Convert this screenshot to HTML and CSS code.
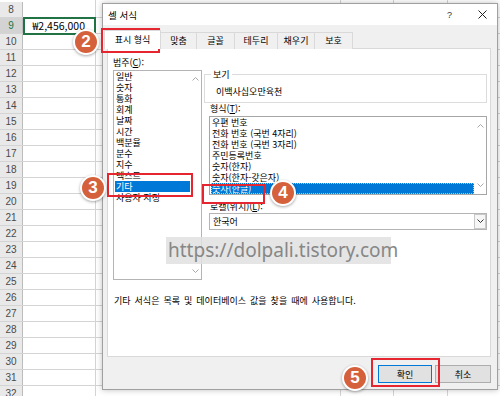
FILE: index.html
```html
<!DOCTYPE html>
<html lang="ko">
<head>
    <meta charset="UTF-8">
    <title>셀 서식</title>
    <link rel="stylesheet" href="styles.css">
</head>
<body>
    <div class="sheet">
        <div class="row"><span class="rh">8</span></div>
        <div class="row active"><span class="rh">9</span><span class="val">₩2,456,000</span></div>
        <div class="row"><span class="rh">10</span></div>
        <div class="row"><span class="rh">11</span></div>
        <div class="row"><span class="rh">12</span></div>
        <div class="row"><span class="rh">13</span></div>
        <div class="row"><span class="rh">14</span></div>
        <div class="row"><span class="rh">15</span></div>
        <div class="row"><span class="rh">16</span></div>
        <div class="row"><span class="rh">17</span></div>
        <div class="row"><span class="rh">18</span></div>
        <div class="row"><span class="rh">19</span></div>
        <div class="row"><span class="rh">20</span></div>
        <div class="row"><span class="rh">21</span></div>
        <div class="row"><span class="rh">22</span></div>
        <div class="row"><span class="rh">23</span></div>
        <div class="row"><span class="rh">24</span></div>
        <div class="row"><span class="rh">25</span></div>
        <div class="row"><span class="rh">26</span></div>
        <div class="row"><span class="rh">27</span></div>
        <div class="row"><span class="rh">28</span></div>
        <div class="row"><span class="rh">29</span></div>
        <div class="row"><span class="rh">30</span></div>
        <div class="row"><span class="rh">31</span></div>
        <div class="row"><span class="rh">32</span></div>
    </div>

    <div class="dialog">
        <div class="titlebar">
            <span class="title">셀 서식</span>
            <span class="help">?</span>
            <svg class="close" width="9" height="9" viewBox="0 0 9 9">
                <path d="M0.5 0.5L8.5 8.5M8.5 0.5L0.5 8.5" stroke="#222" stroke-width="1" fill="none"/>
            </svg>
        </div>

        <div class="tabs">
            <div class="tab on">표시 형식</div>
            <div class="tab">맞춤</div>
            <div class="tab">글꼴</div>
            <div class="tab">테두리</div>
            <div class="tab">채우기</div>
            <div class="tab">보호</div>
        </div>

        <div class="panel">
            <div class="cols">
                <div class="col-left">
                    <div class="label">범주(<u>C</u>):</div>
                    <div class="list cat">
                        <div class="items">
                            <div class="item">일반</div>
                            <div class="item">숫자</div>
                            <div class="item">통화</div>
                            <div class="item">회계</div>
                            <div class="item">날짜</div>
                            <div class="item">시간</div>
                            <div class="item">백분율</div>
                            <div class="item">분수</div>
                            <div class="item">지수</div>
                            <div class="item">텍스트</div>
                            <div class="item sel">기타</div>
                            <div class="item">사용자 지정</div>
                        </div>
                        <div class="scroll">
                            <svg width="7" height="5" viewBox="0 0 7 5"><polyline points="0.5,4.5 3.5,1.5 6.5,4.5" fill="none" stroke="#a8a8a8"/></svg>
                            <svg width="7" height="5" viewBox="0 0 7 5"><polyline points="0.5,0.5 3.5,3.5 6.5,0.5" fill="none" stroke="#a8a8a8"/></svg>
                        </div>
                    </div>
                </div>

                <div class="col-right">
                    <fieldset class="sample">
                        <legend>보기</legend>
                        <div>이백사십오만육천</div>
                    </fieldset>

                    <div class="label inset">형식(<u>T</u>):</div>
                    <div class="list fmt">
                        <div class="items">
                            <div class="item">우편 번호</div>
                            <div class="item">전화 번호 (국번 4자리)</div>
                            <div class="item">전화 번호 (국번 3자리)</div>
                            <div class="item">주민등록번호</div>
                            <div class="item">숫자(한자)</div>
                            <div class="item">숫자(한자-갖은자)</div>
                            <div class="item sel focus">숫자(한글)</div>
                        </div>
                        <div class="scroll">
                            <svg width="7" height="5" viewBox="0 0 7 5"><polyline points="0.5,4.5 3.5,1.5 6.5,4.5" fill="none" stroke="#a8a8a8"/></svg>
                            <svg width="7" height="5" viewBox="0 0 7 5"><polyline points="0.5,0.5 3.5,3.5 6.5,0.5" fill="none" stroke="#a8a8a8"/></svg>
                        </div>
                    </div>

                    <div class="label inset locale">로캘(위치)(<u>L</u>):</div>
                    <div class="select">
                        <span class="select-text">한국어</span>
                        <span class="select-btn">
                            <svg width="7" height="5" viewBox="0 0 7 5"><polyline points="0.5,0.5 3.5,3.5 6.5,0.5" fill="none" stroke="#333"/></svg>
                        </span>
                    </div>
                </div>
            </div>

            <p class="desc">기타 서식은 목록 및 데이터베이스 값을 찾을 때에 사용합니다.</p>
        </div>

        <div class="footer">
            <button class="btn default">확인</button>
            <button class="btn cancel">취소</button>
        </div>
    </div>

    <!-- annotations drawn over the screenshot -->
    <div class="watermark">https://dolpali.tistory.com</div>

    <div class="mark m2"></div>
    <div class="mark m3"></div>
    <div class="mark m4"></div>
    <div class="mark m5"></div>

    <div class="badge b2">2</div>
    <div class="badge b3">3</div>
    <div class="badge b4">4</div>
    <div class="badge b5">5</div>
</body>
</html>
```

FILE: styles.css
```css
* {
    box-sizing: border-box;
}
body {
    margin: 0;
    width: 500px;
    height: 396px;
    overflow: hidden;
    position: relative;
    background: #fff;
    font-family: "Noto Sans CJK KR", "Noto Sans", sans-serif;
    font-size: 9px;
    color: #000;
}

/* spreadsheet behind the dialog */
.sheet {
    padding-top: 2px;
    background:
        linear-gradient(#d4d4d4, #d4d4d4) 95px 0 / 1px 100% no-repeat,
        linear-gradient(#d4d4d4, #d4d4d4) 340px 0 / 1px 100% no-repeat,
        linear-gradient(#d4d4d4, #d4d4d4) 393px 0 / 1px 100% no-repeat,
        linear-gradient(#d4d4d4, #d4d4d4) 447px 0 / 1px 100% no-repeat;
}
.row {
    display: flex;
    height: 16px;
    border-bottom: 1px solid #d4d4d4;
}
.rh {
    width: 23px;
    flex: none;
    background: #e9e9e9;
    border-right: 1px solid #bcbcbc;
    color: #4a4a4a;
    font: 10px/15px "Liberation Sans", sans-serif;
    text-align: center;
}
.row.active .rh {
    background: #d3d3d3;
    color: #217346;
}
.val {
    width: 73px;
    height: 18px;
    margin-top: -1px;
    border: 2px solid #217346;
    padding-right: 9px;
    text-align: right;
    font-size: 10.5px;
    line-height: 14px;
    background: #fff;
}

/* dialog window */
.dialog {
    position: absolute;
    left: 102px;
    top: 3px;
    width: 396px;
    height: 387px;
    border: 1px solid #a0a0a0;
    background: #f0f0f0;
    box-shadow: 0 0 6px rgba(0, 0, 0, 0.25);
    display: flex;
    flex-direction: column;
}
.titlebar {
    height: 21px;
    flex: none;
    background: #fff;
    display: flex;
    align-items: center;
    padding: 0 10px 0 5px;
}
.title {
    font-size: 9.5px;
}
.help {
    margin-left: auto;
    margin-right: 26px;
    font: 9px "Liberation Sans", sans-serif;
    color: #333;
}
.tabs {
    display: flex;
    align-items: flex-end;
    height: 19px;
    margin: 5px 0 -1px 4px;
    position: relative;
    z-index: 1;
}
.tab {
    height: 17px;
    line-height: 15px;
    text-align: center;
    border: 1px solid #d9d9d9;
    border-bottom: none;
    margin-left: -1px;
    background: #f0f0f0;
}
.tab:nth-child(1) { width: 57px; }
.tab:nth-child(2) { width: 37px; }
.tab:nth-child(3) { width: 39px; }
.tab:nth-child(4) { width: 44px; }
.tab:nth-child(5) { width: 38px; }
.tab:nth-child(6) { width: 39px; }
.tab.on {
    height: 19px;
    line-height: 17px;
    margin-left: -3px;
    background: #fff;
}
.panel {
    height: 309px;
    flex: none;
    margin: 0 6px 0 4px;
    background: #fff;
    border: 1px solid #d9d9d9;
    padding: 8px 3px 0 5px;
}
.cols {
    display: grid;
    grid-template-columns: 89px 1fr;
    column-gap: 2px;
}
.label {
    line-height: 11px;
    margin-bottom: 2px;
}
.label.inset {
    margin-left: 6px;
}
.label.locale {
    margin-top: 6px;
    margin-bottom: 1px;
}

.list {
    display: flex;
    border: 1px solid #b4b4b4;
    background: #fff;
}
.list .items {
    flex: 1;
    padding-left: 1px;
}
.item {
    line-height: 11px;
    padding-left: 1px;
    white-space: nowrap;
}
.item.sel {
    background: #0078d7;
    color: #fff;
}
.item.focus {
    outline: 1px dotted #f2c27a;
    outline-offset: -1px;
}
.scroll {
    flex: none;
    display: flex;
    flex-direction: column;
    justify-content: space-between;
    align-items: center;
}
.cat {
    height: 210px;
}
.cat .scroll {
    width: 11px;
    padding: 5px 0 5px;
}
.fmt {
    height: 79px;
    margin-left: 5px;
    border-color: #a6a6a6;
}
.fmt .scroll {
    width: 12px;
    padding: 6px 0 6px;
}

.sample {
    margin: 12px 0 0;
    padding: 6px 11px 5px;
    border: 1px solid #dcdcdc;
    line-height: 11px;
    min-width: 0;
}
.sample legend {
    padding: 0 2px;
    margin-left: -5px;
    line-height: 11px;
}
.select {
    display: flex;
    height: 17px;
    margin-left: 5px;
    border: 1px solid #b4b4b4;
    background: #fff;
}
.select-text {
    flex: 1;
    padding-left: 3px;
    line-height: 15px;
}
.select-btn {
    width: 12px;
    border: 1px solid #c8c8c8;
    background: #f6f6f6;
    display: flex;
    align-items: center;
    justify-content: center;
}
.desc {
    margin: 15px 0 0 1px;
    line-height: 11px;
    word-spacing: 1.5px;
}

.footer {
    flex: 1;
    display: flex;
    justify-content: flex-end;
    gap: 3px;
    padding: 8px 6px 0 0;
}
.btn {
    height: 18px;
    padding: 0;
    font: inherit;
    background: #e1e1e1;
    border: 1px solid #adadad;
    color: #000;
}
.btn.default {
    width: 54px;
    border-color: #0078d7;
}
.btn.cancel {
    width: 56px;
}

/* overlays */
.watermark {
    position: absolute;
    left: 166px;
    top: 237px;
    width: 225px;
    height: 27px;
    padding-left: 2px;
    background: rgba(224, 224, 224, 0.85);
    color: #878787;
    font: 19px/27px "Noto Sans", sans-serif;
    white-space: nowrap;
}
.mark {
    position: absolute;
    border: 2px solid #e5252f;
}
.m2 { left: 101px; top: 28px; width: 59px; height: 25px; }
.m3 { left: 107px; top: 173px; width: 86px; height: 24px; }
.m4 { left: 202px; top: 184px; width: 63px; height: 20px; }
.m5 { left: 371px; top: 358px; width: 69px; height: 29px; }

.badge {
    position: absolute;
    width: 26px;
    height: 26px;
    border-radius: 50%;
    background: #d5613c;
    border: 2px solid #fff;
    box-shadow: 0 1px 3px rgba(0, 0, 0, 0.35);
    color: #fff;
    font: bold 17px/22px "Liberation Sans", sans-serif;
    text-align: center;
}
.b2 { left: 73px; top: 29px; }
.b3 { left: 80px; top: 175px; }
.b4 { left: 270px; top: 180px; }
.b5 { left: 342px; top: 365px; }
```
